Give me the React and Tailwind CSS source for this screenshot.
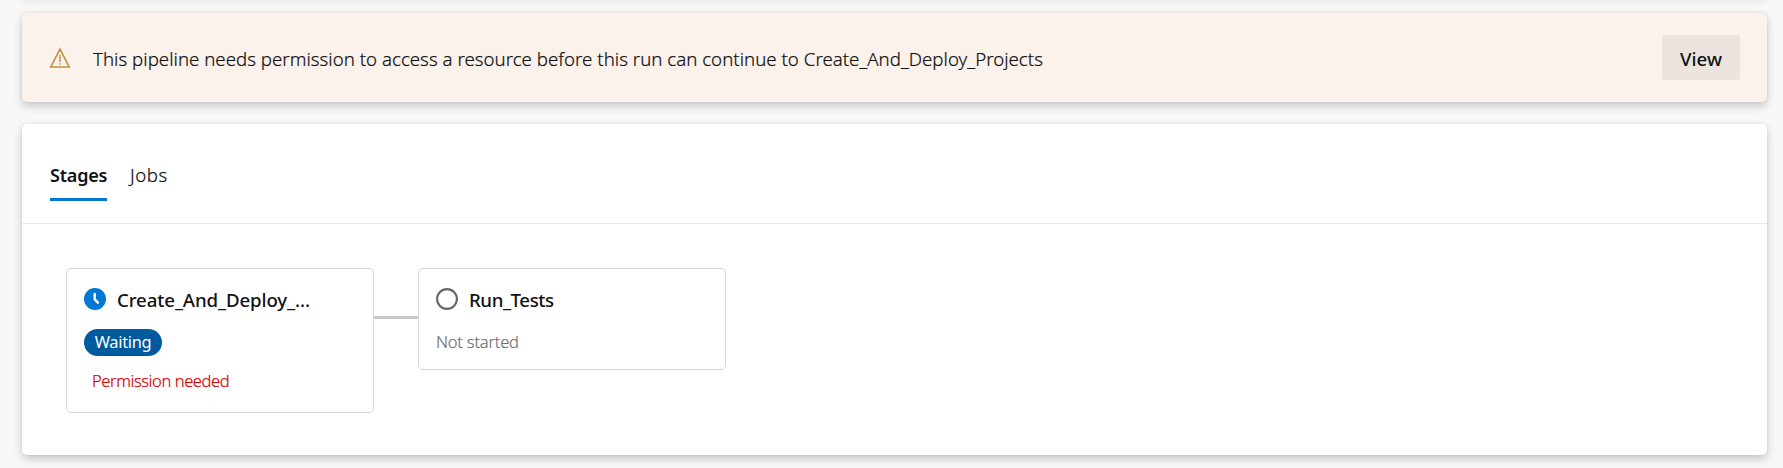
import React from 'react';

function WarningIcon() {
  return (
    <svg className="h-[22px] w-[22px] shrink-0" viewBox="0 0 22 22" fill="none" stroke="#c1923c">
      <path d="M11 2.1 20.2 20H1.8Z" strokeWidth="1.6" />
      <path d="M11 8v7M11 16.2v1.6" strokeWidth="1.5" />
    </svg>
  );
}

function ClockIcon() {
  return (
    <svg className="h-[22px] w-[22px] shrink-0" viewBox="0 0 22 22" fill="none">
      <circle cx="11" cy="11" r="11" fill="#0078d4" />
      <path d="M10.7 6v5.3l3.2 3.3" stroke="#fff" strokeWidth="2.5" strokeLinecap="round" strokeLinejoin="round" />
    </svg>
  );
}

function PendingIcon() {
  return (
    <svg className="h-[22px] w-[22px] shrink-0" viewBox="0 0 22 22" fill="none">
      <circle cx="11" cy="11" r="9.9" stroke="#666" strokeWidth="2.1" />
    </svg>
  );
}

function StageCard({ icon, title, titleClass, height, children }) {
  return (
    <div className={`w-[308px] rounded-[5px] border border-[#d6d6d6] px-[17px] pt-[19px] ${height}`}>
      <div className="flex h-[22px] items-center gap-[11px]">
        {icon}
        <span className={`relative top-px font-medium text-[18.67px] leading-[22px] ${titleClass}`}>{title}</span>
      </div>
      {children}
    </div>
  );
}

const cardShadow = 'shadow-[0_4px_10px_rgba(0,0,0,0.2),0_0_3px_rgba(0,0,0,0.08)]';
const bodyText = 'font-light [-webkit-text-stroke:0.2px_currentColor]';

export default function App() {
  return (
    <div className="h-[468px] overflow-hidden bg-[#f8f8f8] pl-[22px] pr-[16px] font-['Noto_Sans',sans-serif] text-[#111]">
      <div className="-mt-[11px] h-[5px] rounded-[5px] bg-white shadow-[0_4px_10px_rgba(0,0,0,0.2)]" />

      <div className={`mt-[19px] flex h-[89px] items-center rounded-[5px] bg-[#fbf2ec] pl-[27px] pr-[27px] ${cardShadow}`}>
        <WarningIcon />
        <p className={`ml-[22px] flex-1 pt-[2px] text-[18.67px] leading-7 tracking-[0.02px] text-[#111] ${bodyText}`}>
          This pipeline needs permission to access a resource before this run can continue to Create_And_Deploy_Projects
        </p>
        <button className="h-[45px] w-[78px] rounded-[3px] bg-[#ece4de] pt-[2px] text-[18.67px] font-medium">View</button>
      </div>

      <main className={`mt-[22px] h-[331px] rounded-[5px] bg-white ${cardShadow}`}>
        <nav className="flex h-[100px] gap-[22px] border-b border-[#e8e8e8] pl-7 pt-[36px]">
          <span className="h-[41px] w-[57px] whitespace-nowrap border-b-[3px] border-[#0078d4] text-[18px] font-semibold leading-[30px] tracking-[-0.2px]">
            Stages
          </span>
          <span className={`pl-px text-[18.67px] leading-[30px] tracking-[0.5px] text-[#111] ${bodyText}`}>Jobs</span>
        </nav>

        <div className="flex items-start pl-[44px] pt-[44px]">
          <StageCard icon={<ClockIcon />} title="Create_And_Deploy_..." titleClass="tracking-[-0.12px]" height="h-[145px]">
            <div className="mt-[19px] flex h-[27px] w-[78px] items-center justify-center rounded-full bg-[#005a9e] text-[16.4px] font-normal tracking-[-0.3px] text-white">
              Waiting
            </div>
            <p className={`mt-[12px] pl-2 text-[16.5px] leading-[26px] tracking-[-0.4px] text-[#d60000] ${bodyText}`}>Permission needed</p>
          </StageCard>
          <div className="mt-[48px] h-[3px] w-[44px] bg-[#c8c8c8]" />
          <StageCard icon={<PendingIcon />} title="Run_Tests" titleClass="tracking-[-0.42px]" height="h-[102px]">
            <p className={`mt-[18px] text-[16.5px] leading-[27px] tracking-[-0.2px] text-[#707070] ${bodyText}`}>Not started</p>
          </StageCard>
        </div>
      </main>
    </div>
  );
}
